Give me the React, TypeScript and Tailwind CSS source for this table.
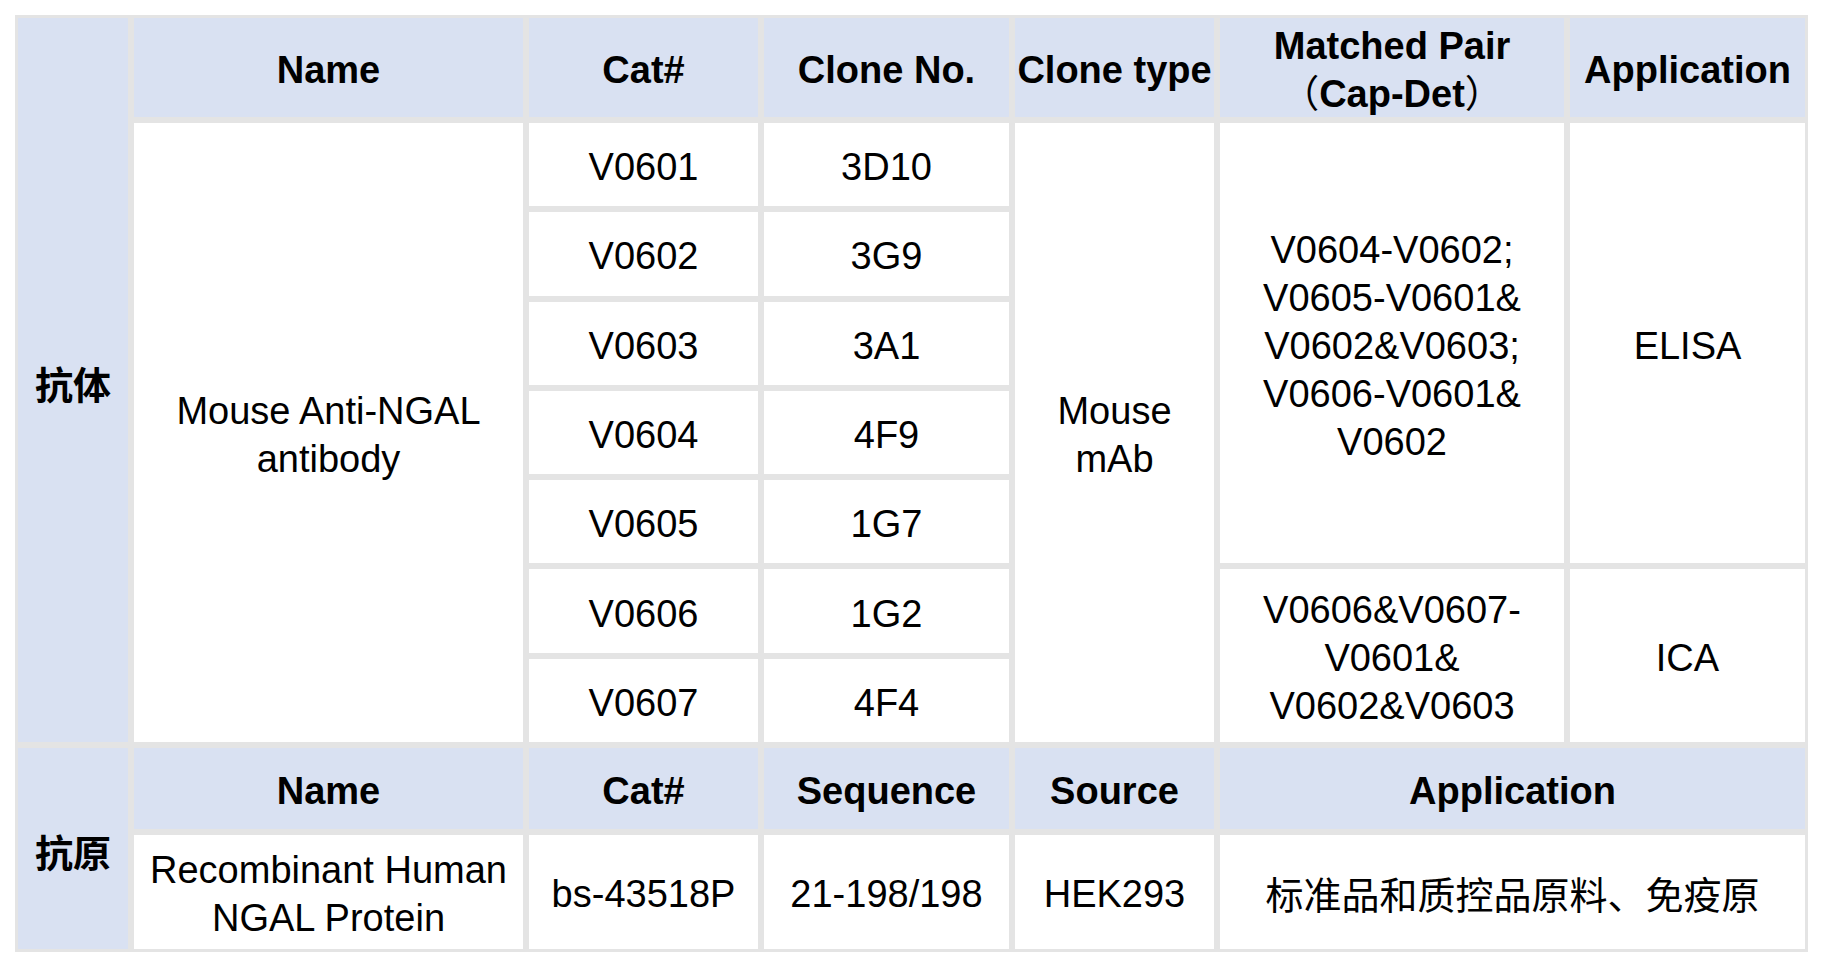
import React from "react";

const font = { fontFamily: '"Liberation Sans", Arial, "Noto Sans CJK SC", sans-serif' };

function Cell({ className = "", head = false, children }: { className?: string; head?: boolean; children?: React.ReactNode }) {
  return (
    <div
      className={
        "flex items-center justify-center text-center text-[38px] leading-[48px] text-black " +
        (head ? "bg-[#d9e1f2] font-bold " : "bg-white ") +
        (className.includes("pt-") ? "" : "pt-[5px] ") +
        className
      }
    >
      <div>{children}</div>
    </div>
  );
}

const rows = [
  ["V0601", "3D10"],
  ["V0602", "3G9"],
  ["V0603", "3A1"],
  ["V0604", "4F9"],
  ["V0605", "1G7"],
  ["V0606", "1G2"],
  ["V0607", "4F4"],
];

const rowStart = ["row-start-2", "row-start-3", "row-start-4", "row-start-5", "row-start-6", "row-start-7", "row-start-8"];

export default function App() {
  return (
    <div className="min-h-[968px] w-[1824px] bg-white pl-[15px] pt-[15px]" style={font}>
      <div className="grid h-[937px] w-[1793px] grid-cols-[110px_389px_229px_245px_199px_344px_235px] grid-rows-[99px_repeat(7,minmax(0,1fr))_81px_114px] gap-[6px] bg-[#e4e4e4] p-[3px]">
        <Cell head className="col-start-1 row-start-1 row-span-8 pt-[12px]">抗体</Cell>
        <Cell head className="col-start-2 row-start-1">Name</Cell>
        <Cell head className="col-start-3 row-start-1">Cat#</Cell>
        <Cell head className="col-start-4 row-start-1">Clone No.</Cell>
        <Cell head className="col-start-5 row-start-1">Clone type</Cell>
        <Cell head className="col-start-6 row-start-1">
          Matched Pair
          <br />
          <span className="inline-block w-[1em] text-right font-normal">（</span>
          Cap-Det
          <span className="inline-block w-[1em] text-left font-normal">）</span>
        </Cell>
        <Cell head className="col-start-7 row-start-1">Application</Cell>

        <Cell className="col-start-2 row-start-2 row-span-7">
          Mouse Anti-NGAL
          <br />
          antibody
        </Cell>
        {rows.map(([cat, clone], i) => (
          <React.Fragment key={cat}>
            <Cell className={"col-start-3 " + rowStart[i]}>{cat}</Cell>
            <Cell className={"col-start-4 " + rowStart[i]}>{clone}</Cell>
          </React.Fragment>
        ))}
        <Cell className="col-start-5 row-start-2 row-span-7">
          Mouse
          <br />
          mAb
        </Cell>
        <Cell className="col-start-6 row-start-2 row-span-5">
          V0604-V0602;
          <br />
          V0605-V0601&amp;
          <br />
          V0602&amp;V0603;
          <br />
          V0606-V0601&amp;
          <br />
          V0602
        </Cell>
        <Cell className="col-start-7 row-start-2 row-span-5">ELISA</Cell>
        <Cell className="col-start-6 row-start-7 row-span-2">
          V0606&amp;V0607-
          <br />
          V0601&amp;
          <br />
          V0602&amp;V0603
        </Cell>
        <Cell className="col-start-7 row-start-7 row-span-2">ICA</Cell>

        <Cell head className="col-start-1 row-start-9 row-span-2 pt-[12px]">抗原</Cell>
        <Cell head className="col-start-2 row-start-9">Name</Cell>
        <Cell head className="col-start-3 row-start-9">Cat#</Cell>
        <Cell head className="col-start-4 row-start-9">Sequence</Cell>
        <Cell head className="col-start-5 row-start-9">Source</Cell>
        <Cell head className="col-start-6 col-span-2 row-start-9">Application</Cell>

        <Cell className="col-start-2 row-start-10">
          Recombinant Human
          <br />
          NGAL Protein
        </Cell>
        <Cell className="col-start-3 row-start-10">bs-43518P</Cell>
        <Cell className="col-start-4 row-start-10">21-198/198</Cell>
        <Cell className="col-start-5 row-start-10">HEK293</Cell>
        <Cell className="col-start-6 col-span-2 row-start-10 pt-[9px]">标准品和质控品原料、免疫原</Cell>
      </div>
    </div>
  );
}
